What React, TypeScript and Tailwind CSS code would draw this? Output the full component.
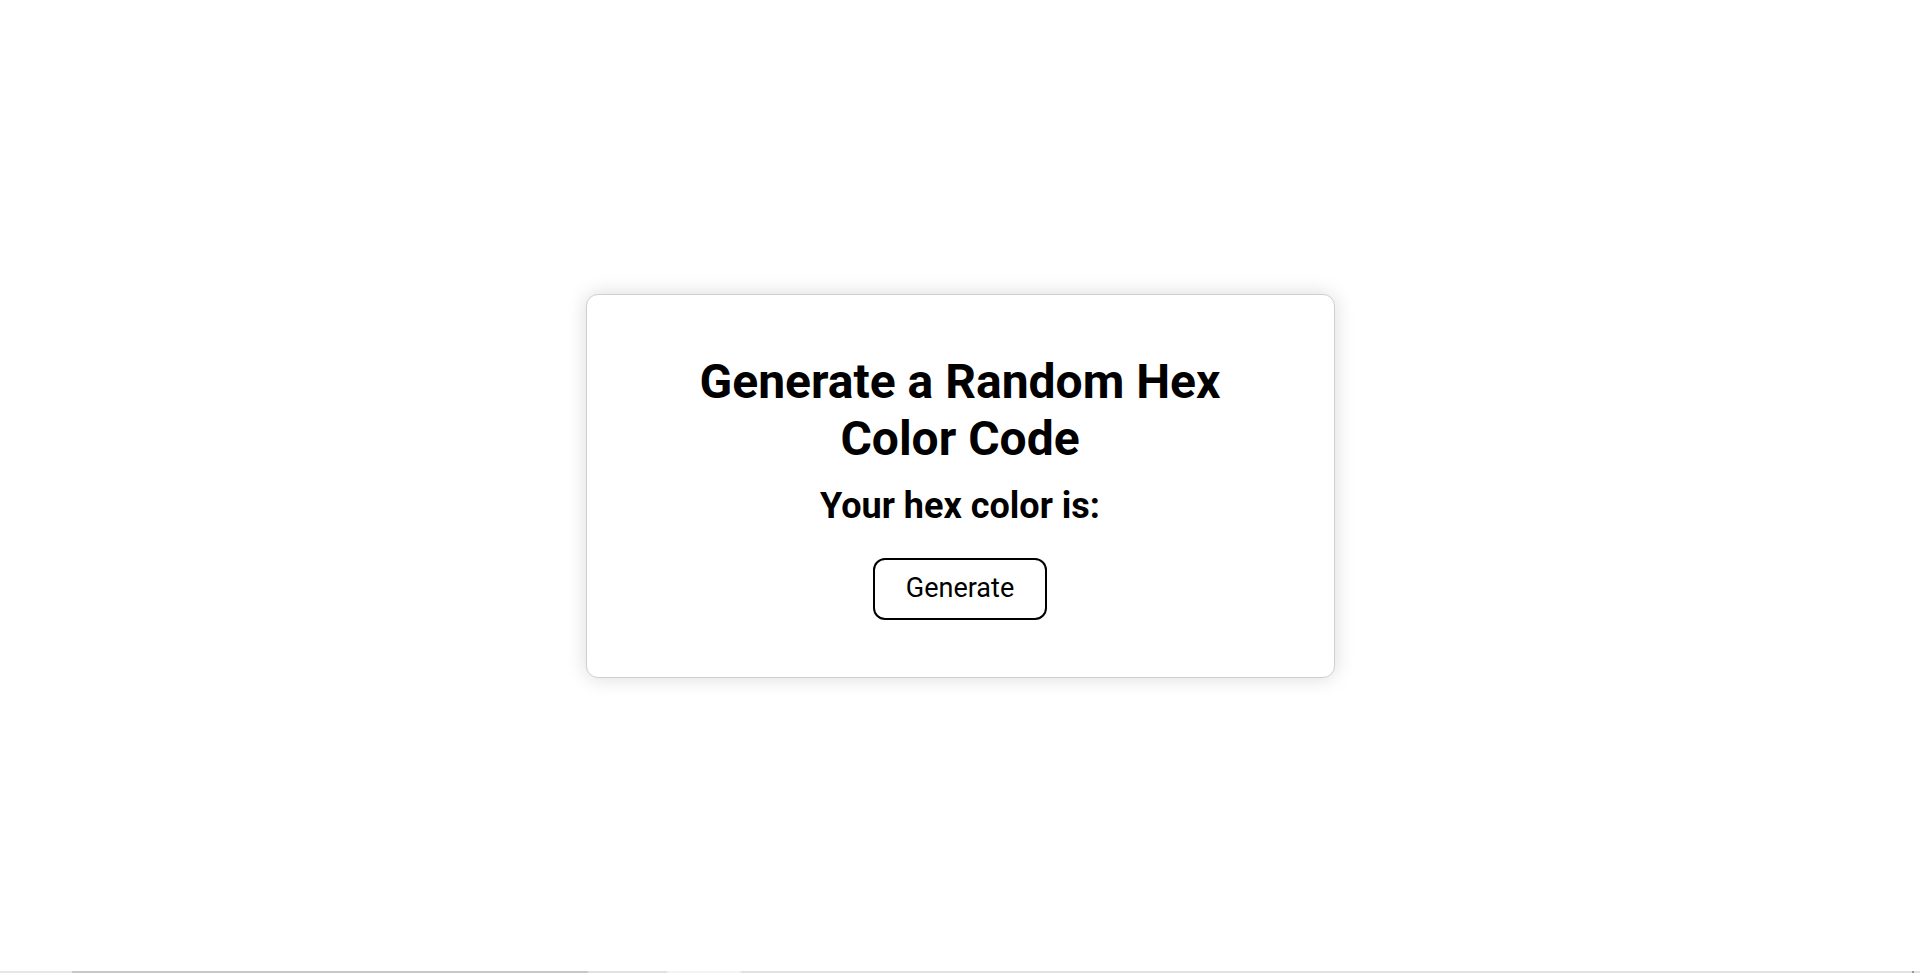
import React from "react";

export default function App() {
  return (
    <div className="w-full h-[973px] bg-white flex flex-col" style={{ fontFamily: "Roboto, 'Liberation Sans', sans-serif" }}>
      <div className="flex-1 flex items-center justify-center">
        <div className="w-[749px] h-[384px] bg-white border border-[#cfcfcf] rounded-[12px] shadow-[0_0_20px_rgba(0,0,0,0.15)] flex flex-col items-center pt-[58px]">
          <h1 className="max-w-[560px] text-center text-[48px] leading-[57.6px] font-bold text-black">
            Generate a Random Hex Color Code
          </h1>
          <h2 className="mt-[17px] text-[36px] leading-[42.2px] font-bold text-black">Your hex color is:</h2>
          <button className="mt-[31px] h-[62px] border-2 border-black rounded-[12px] bg-white px-[30.5px] text-[27px] leading-[31.6px] text-black">
            Generate
          </button>
        </div>
      </div>
      <div className="h-[2px] flex w-full">
        <div className="w-[72px] bg-[#e6e6e6]" />
        <div className="w-[516px] bg-[#c8c8c8]" />
        <div className="w-[79px] bg-[#e2e2e2]" />
        <div className="w-[74px] bg-[#f3f3f3]" />
        <div className="flex-1 bg-[#e2e2e2]" />
        <div className="w-[2px] bg-[#9a9a9a]" />
        <div className="w-[6px] bg-[#e2e2e2]" />
      </div>
    </div>
  );
}
